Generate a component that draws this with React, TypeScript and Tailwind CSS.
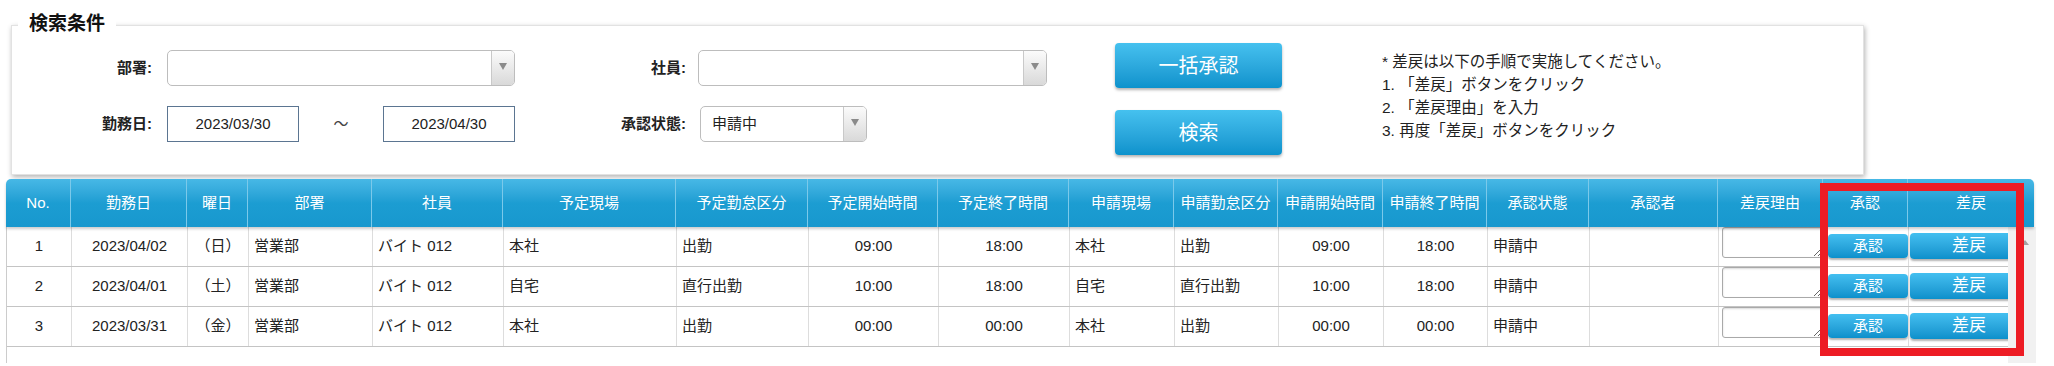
import React from 'react';

const FONT = "font-['Liberation_Sans','Noto_Sans_CJK_JP',sans-serif]";
const COLS =
  'grid grid-cols-[64px_116px_61px_124px_131px_173px_132px_130px_131px_105px_104px_105px_104px_102px_129px_105px_85px_127px]';

const headers = [
  'No.', '勤務日', '曜日', '部署', '社員', '予定現場', '予定勤怠区分', '予定開始時間', '予定終了時間',
  '申請現場', '申請勤怠区分', '申請開始時間', '申請終了時間', '承認状態', '承認者', '差戻理由', '承認', '差戻',
];

// true = centered, false = left aligned
const centered = [true, true, true, false, false, false, false, true, true, false, false, true, true, false, false];

const rows = [
  ['1', '2023/04/02', '（日）', '営業部', 'バイト 012', '本社', '出勤', '09:00', '18:00', '本社', '出勤', '09:00', '18:00', '申請中', ''],
  ['2', '2023/04/01', '（土）', '営業部', 'バイト 012', '自宅', '直行出勤', '10:00', '18:00', '自宅', '直行出勤', '10:00', '18:00', '申請中', ''],
  ['3', '2023/03/31', '（金）', '営業部', 'バイト 012', '本社', '出勤', '00:00', '00:00', '本社', '出勤', '00:00', '00:00', '申請中', ''],
];

function SelectBox({ value, className }: { value?: string; className: string }) {
  return (
    <div className={`flex h-[36px] bg-white border border-[#bdbdbd] rounded-[5px] overflow-hidden ${className}`}>
      <div className="flex-1 flex items-center pl-[11px] text-[15px] text-[#222]">{value}</div>
      <div className="w-[23px] flex justify-center pt-[12px] border-l border-[#c9c9c9] bg-gradient-to-b from-[#fbfbfb] to-[#d9d9d9]">
        <div className="w-0 h-0 border-x-[4px] border-x-transparent border-t-[7px] border-t-[#8a8a8a]" />
      </div>
    </div>
  );
}

function DateInput({ value }: { value: string }) {
  return (
    <div className="w-[132px] h-[36px] flex items-center justify-center border border-[#5b7591] bg-white text-[15px] text-[#222]">
      {value}
    </div>
  );
}

function BigButton({ label }: { label: string }) {
  return (
    <button className="w-[167px] h-[45px] rounded-[4px] bg-gradient-to-b from-[#45c1ef] to-[#0b92cc] text-white text-[20px] shadow-[0_2px_3px_rgba(0,0,0,0.3)]">
      {label}
    </button>
  );
}

export default function App() {
  return (
    <div className={`relative w-[2054px] h-[366px] bg-white overflow-hidden text-[#222] ${FONT}`}>
      {/* 検索条件 panel */}
      <div className="pt-[25px] pl-[11px]">
        <div className="relative w-[1853px] h-[150px] border border-[#e2e2e2] bg-white shadow-[1px_2px_5px_rgba(0,0,0,0.3)] flex items-start">
          <div className="absolute left-[6px] top-[-14px] px-[11px] bg-white text-[19px] leading-[24px] font-bold text-[#111]">
            検索条件
          </div>

          <div className="mt-[24px] grid grid-cols-[155px_348px_183px_349px] grid-rows-[36px_36px] gap-y-[20px] items-center">
            <div className="text-right pr-[15px] text-[15px] font-bold">部署:</div>
            <SelectBox className="w-[348px]" />
            <div className="text-right pr-[12px] text-[15px] font-bold">社員:</div>
            <SelectBox className="w-[349px]" />

            <div className="text-right pr-[15px] text-[15px] font-bold">勤務日:</div>
            <div className="flex items-center">
              <DateInput value="2023/03/30" />
              <div className="flex-1 text-center text-[15px] text-[#444]">～</div>
              <DateInput value="2023/04/30" />
            </div>
            <div className="text-right pr-[12px] text-[15px] font-bold">承認状態:</div>
            <SelectBox value="申請中" className="w-[167px] ml-[2px]" />
          </div>

          <div className="ml-[68px] mt-[17px] flex flex-col gap-[22px]">
            <BigButton label="一括承認" />
            <BigButton label="検索" />
          </div>

          <div className="ml-[100px] mt-[24px] text-[15.5px] leading-[23px] text-[#222]">
            <div>* 差戻は以下の手順で実施してください。</div>
            <div>1. 「差戻」ボタンをクリック</div>
            <div>2. 「差戻理由」を入力</div>
            <div>3. 再度「差戻」ボタンをクリック</div>
          </div>
        </div>
      </div>

      {/* 一覧 table */}
      <div className="mt-[4px] ml-[6px]">
        <div className={`${COLS} relative z-10 w-[2028px] h-[48px] rounded-t-[5px] bg-gradient-to-b from-[#47b8e6] via-[#1c9dd2] to-[#1898ce] text-white text-[15px] shadow-[0_2px_3px_rgba(0,0,0,0.2)]`}>
          {headers.map((h, i) => (
            <div key={i} className={`flex items-center justify-center ${i > 0 ? 'border-l border-[#7bc9ea]' : ''}`}>
              {h}
            </div>
          ))}
        </div>

        <div className="flex h-[136px]">
          <div className="w-[2002px] overflow-hidden border-l border-[#cccccc]">
            {rows.map((r, ri) => (
              <div key={ri} className={`${COLS} w-[2027px] h-[40px] border-b border-[#c4c4c4] text-[15px]`}>
                {r.map((c, ci) => (
                  <div
                    key={ci}
                    className={`flex items-center ${centered[ci] ? 'justify-center' : 'pl-[5px]'} ${ci > 0 ? 'border-l border-[#dddddd]' : ''}`}
                  >
                    {c}
                  </div>
                ))}
                <div className="border-l border-[#dddddd] pl-[3px]">
                  <textarea className="block w-[101px] h-[31px] border border-[#a9a9a9] rounded-[3px] bg-white shadow-[inset_0_1px_2px_rgba(0,0,0,0.15)]" />
                </div>
                <div className="border-l border-[#dddddd] pl-[4px] pt-[7px]">
                  <button className="w-[80px] h-[24px] rounded-[4px] bg-gradient-to-b from-[#43bff0] to-[#0b90cb] text-white text-[15px] leading-[24px] shadow-[0_2px_2px_rgba(0,0,0,0.3)]">
                    承認
                  </button>
                </div>
                <div className="border-l border-[#dddddd] pl-[1px] pt-[6px]">
                  <button className="w-[118px] h-[26px] rounded-[4px] bg-gradient-to-b from-[#43bff0] to-[#0b90cb] text-white text-[17px] leading-[26px] shadow-[0_2px_2px_rgba(0,0,0,0.3)]">
                    差戻
                  </button>
                </div>
              </div>
            ))}
          </div>
          {/* scrollbar */}
          <div className="w-[28px] bg-[#f1f1f1] flex justify-center pt-[13px] pl-[6px]">
            <div className="w-0 h-0 border-x-[4px] border-x-transparent border-b-[5px] border-b-[#a3a3a3]" />
          </div>
        </div>
      </div>

      {/* annotation */}
      <div className="absolute z-20 left-[1820px] top-[183px] w-[204px] h-[173px] border-[8px] border-[#ed1c24]" />
    </div>
  );
}
